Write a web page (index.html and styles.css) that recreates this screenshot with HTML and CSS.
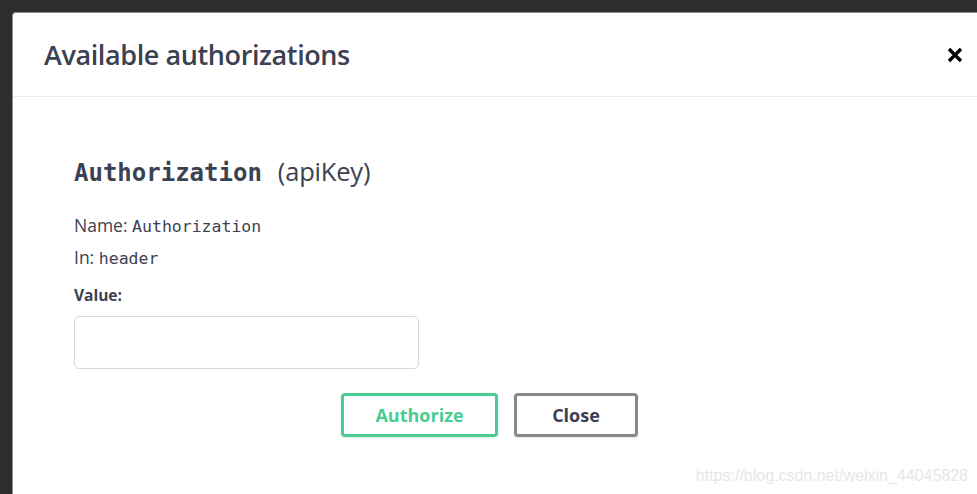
FILE: index.html
```html
<!DOCTYPE html>
<html>
<head>
<meta charset="utf-8">
<link rel="stylesheet" href="styles.css">
</head>
<body>
<div class="backdrop">
  <div class="modal">
    <div class="modal-header">
      <h3 class="modal-title">Available authorizations</h3>
      <button class="close-x" aria-label="Close">
        <svg width="18" height="18" viewBox="0 0 18 18"><path d="M3 3 L15 15 M15 3 L3 15" stroke="#000" stroke-width="3.4" stroke-linecap="butt"/></svg>
      </button>
    </div>
    <div class="modal-body">
      <h4 class="scheme-title"><code>Authorization</code><span class="scheme-type">(apiKey)</span></h4>
      <p class="info-line">Name: <code>Authorization</code></p>
      <p class="info-line">In: <code>header</code></p>
      <label class="value-label">Value:</label>
      <input class="value-input" type="text">
      <div class="actions">
        <button class="btn btn-authorize">Authorize</button>
        <button class="btn btn-close">Close</button>
      </div>
    </div>
    <div class="watermark">https://blog.csdn.net/weixin_44045828</div>
  </div>
</div>
</body>
</html>
```

FILE: styles.css
```css
html, body {
  margin: 0;
  padding: 0;
  height: 100%;
  background: #2e2e2e;
  overflow: hidden;
}

.backdrop {
  padding: 12px 0 0 12px;
  height: 100%;
  box-sizing: border-box;
}

.modal {
  position: relative;
  background: #fff;
  height: 100%;
  border-top: 1px solid #8d8d8d;
  border-left: 1px solid #8d8d8d;
  border-top-left-radius: 4px;
  font-family: "Open Sans", sans-serif;
  color: #3b4151;
}

.modal-header {
  display: flex;
  align-items: center;
  justify-content: space-between;
  height: 83px;
  padding: 0 13px 0 31px;
  border-bottom: 1px solid #ebebeb;
}

.modal-title {
  margin: 0;
  font-family: "Open Sans", sans-serif;
  font-weight: 600;
  font-size: 27px;
  letter-spacing: -0.4px;
  color: #3b4151;
}

.close-x {
  border: 0;
  background: none;
  padding: 0;
  width: 18px;
  height: 18px;
  display: flex;
}

.modal-body {
  padding: 58px 0 0 61px;
}

.scheme-title {
  margin: 0;
  font-size: 26px;
  line-height: 32px;
  font-weight: 700;
  display: flex;
  align-items: baseline;
  gap: 16px;
}

.scheme-title code {
  font-family: "DejaVu Sans Mono", monospace;
  font-size: 24px;
  font-weight: 700;
}

.scheme-type {
  font-family: "Open Sans", sans-serif;
  font-weight: 400;
  font-size: 25.5px;
  letter-spacing: -0.2px;
}

.info-line {
  margin: 0;
  font-size: 17.5px;
  line-height: 31px;
}

.scheme-title + .info-line {
  margin-top: 21px;
}

.info-line code {
  font-family: "DejaVu Sans Mono", monospace;
  font-size: 16.5px;
}

.value-label {
  display: block;
  margin-top: 10px;
  font-size: 15.5px;
  font-weight: 700;
  line-height: 22px;
}

.value-input {
  display: block;
  box-sizing: border-box;
  width: 345px;
  height: 53px;
  margin-top: 10px;
  border: 1px solid #d9d9d9;
  border-radius: 5px;
  background: #fff;
}

.actions {
  display: flex;
  gap: 16px;
  margin-top: 24px;
  padding-left: 267px;
}

.btn {
  box-sizing: border-box;
  height: 44px;
  border-radius: 4px;
  background: #fff;
  font-family: "Open Sans", sans-serif;
  font-size: 18px;
  font-weight: 700;
  box-shadow: 0 1px 2px rgba(0,0,0,0.1);
}

.btn-authorize {
  width: 157px;
  border: 3px solid #49cc90;
  color: #49cc90;
}

.btn-close {
  width: 124px;
  border: 3px solid #888;
  color: #3b4151;
}

.watermark {
  position: absolute;
  right: 9px;
  top: 454px;
  font-family: "Liberation Sans", sans-serif;
  font-size: 16px;
  color: #e6e6e6;
}
```
